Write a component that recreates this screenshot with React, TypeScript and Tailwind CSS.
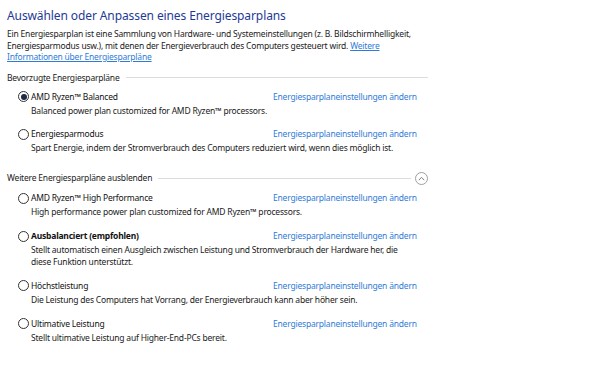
import { ReactNode } from 'react';

type Plan = {
  name: string;
  desc: string[];
  selected?: boolean;
  bold?: boolean;
};

const preferred: Plan[] = [
  { name: 'AMD Ryzen™ Balanced', desc: ['Balanced power plan customized for AMD Ryzen™ processors.'], selected: true },
  { name: 'Energiesparmodus', desc: ['Spart Energie, indem der Stromverbrauch des Computers reduziert wird, wenn dies möglich ist.'] },
];

const more: Plan[] = [
  { name: 'AMD Ryzen™ High Performance', desc: ['High performance power plan customized for AMD Ryzen™ processors.'] },
  {
    name: 'Ausbalanciert (empfohlen)',
    desc: ['Stellt automatisch einen Ausgleich zwischen Leistung und Stromverbrauch der Hardware her, die', 'diese Funktion unterstützt.'],
    bold: true,
  },
  { name: 'Höchstleistung', desc: ['Die Leistung des Computers hat Vorrang, der Energieverbrauch kann aber höher sein.'] },
  { name: 'Ultimative Leistung', desc: ['Stellt ultimative Leistung auf Higher-End-PCs bereit.'] },
];

const Radio = ({ checked }: { checked?: boolean }) => (
  <span className="w-[11px] h-[11px] rounded-full border border-[#333] bg-white flex items-center justify-center shrink-0">
    {checked && <span className="w-[6px] h-[6px] rounded-full bg-[#1f2a44]" />}
  </span>
);

const SectionHeader = ({ children, collapse }: { children: ReactNode; collapse?: boolean }) => (
  <div className="flex items-center h-[12px] leading-[12px]">
    <span className="text-[#1a1a1a] pr-[6px] whitespace-nowrap">{children}</span>
    <div className="flex-1 h-px bg-[#dcdcdc]" />
    {collapse && (
      <span className="ml-[4px] mr-[-6px] w-[13px] h-[13px] rounded-full border border-[#a0a0a0] flex items-center justify-center">
        <svg width="7" height="5" viewBox="0 0 7 5" fill="none">
          <path d="M0.8 4.2 L3.5 1.3 L6.2 4.2" stroke="#808080" strokeWidth="1" />
        </svg>
      </span>
    )}
  </div>
);

const PlanRow = ({ plan }: { plan: Plan }) => (
  <div className="pl-[11px]">
    <div className="grid grid-cols-[255px_auto] h-[12px] leading-[12px] items-center">
      <div className="flex items-center gap-[2px]">
        <Radio checked={plan.selected} />
        <span className={plan.bold ? 'font-bold text-[#111]' : 'text-[#111]'}>{plan.name}</span>
      </div>
      <a className="text-[#2f7bd8] whitespace-nowrap">Energiesparplaneinstellungen ändern</a>
    </div>
    <div className="pl-[13px] mt-[2px] text-[#1a1a1a] leading-[12px]">
      {plan.desc.map((d) => (
        <div key={d} className="whitespace-nowrap">{d}</div>
      ))}
    </div>
  </div>
);

export default function App() {
  return (
    <div
      className="w-[590px] h-[388px] bg-white px-[7px] pt-[8px] text-[8.5px] tracking-[-0.2px] overflow-hidden"
      style={{ fontFamily: '"Noto Sans", "Open Sans", sans-serif' }}
    >
      <h1 className="text-[12px] tracking-[-0.1px] leading-[16px] text-[#1e3a96]">Auswählen oder Anpassen eines Energiesparplans</h1>
      <p className="mt-[4px] leading-[11.5px] text-[#1a1a1a] whitespace-nowrap">
        Ein Energiesparplan ist eine Sammlung von Hardware- und Systemeinstellungen (z. B. Bildschirmhelligkeit,
        <br />
        Energiesparmodus usw.), mit denen der Energieverbrauch des Computers gesteuert wird.{' '}
        <a className="text-[#2f7bd8] underline">Weitere</a>
        <br />
        <a className="text-[#2f7bd8] underline">Informationen über Energiesparpläne</a>
      </p>

      <div className="w-[421px] mt-[9px]">
        <SectionHeader>Bevorzugte Energiesparpläne</SectionHeader>
        <div className="mt-[7px] flex flex-col gap-[11.8px]">
          {preferred.map((p) => (
            <PlanRow key={p.name} plan={p} />
          ))}
        </div>

        <div className="mt-[18px] pr-[6px]">
          <SectionHeader collapse>Weitere Energiesparpläne ausblenden</SectionHeader>
        </div>
        <div className="mt-[8px] flex flex-col gap-[11.8px]">
          {more.map((p) => (
            <PlanRow key={p.name} plan={p} />
          ))}
        </div>
      </div>
    </div>
  );
}
